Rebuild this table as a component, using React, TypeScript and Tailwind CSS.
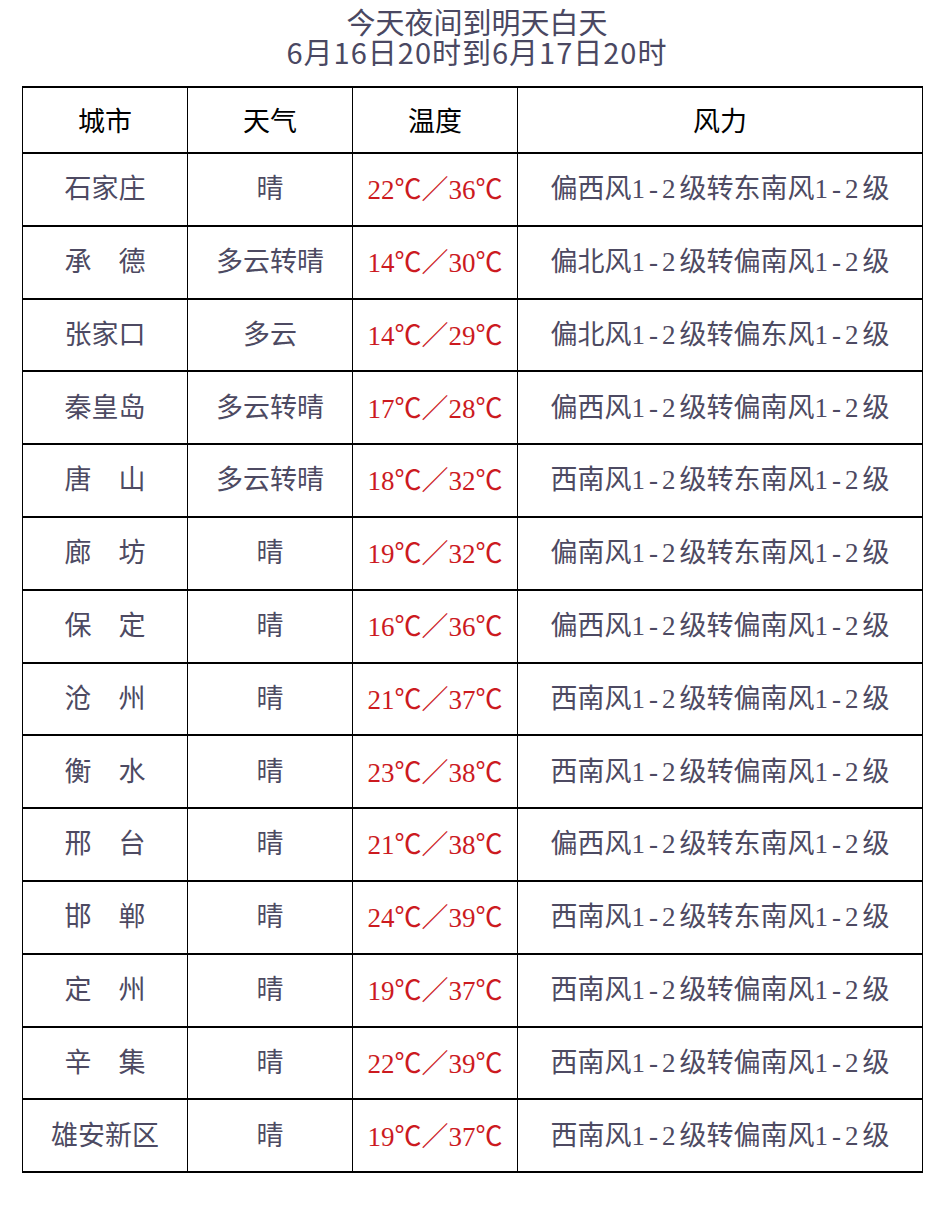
import React from "react";

const rows: [string, string, [string, string], string[]][] = [
  ["石家庄", "晴", ["22", "36"], ["偏西风", "转东南风"]],
  ["承　德", "多云转晴", ["14", "30"], ["偏北风", "转偏南风"]],
  ["张家口", "多云", ["14", "29"], ["偏北风", "转偏东风"]],
  ["秦皇岛", "多云转晴", ["17", "28"], ["偏西风", "转偏南风"]],
  ["唐　山", "多云转晴", ["18", "32"], ["西南风", "转东南风"]],
  ["廊　坊", "晴", ["19", "32"], ["偏南风", "转东南风"]],
  ["保　定", "晴", ["16", "36"], ["偏西风", "转偏南风"]],
  ["沧　州", "晴", ["21", "37"], ["西南风", "转偏南风"]],
  ["衡　水", "晴", ["23", "38"], ["西南风", "转偏南风"]],
  ["邢　台", "晴", ["21", "38"], ["偏西风", "转东南风"]],
  ["邯　郸", "晴", ["24", "39"], ["西南风", "转东南风"]],
  ["定　州", "晴", ["19", "37"], ["西南风", "转偏南风"]],
  ["辛　集", "晴", ["22", "39"], ["西南风", "转偏南风"]],
  ["雄安新区", "晴", ["19", "37"], ["西南风", "转偏南风"]],
];

const body = "[font-family:'Liberation_Serif','Noto_Sans_CJK_SC',serif]";
const cjk = "[font-family:'Noto_Sans_CJK_SC',sans-serif]";
const cell = "border-x-[1.5px] border-y-2 border-black text-center p-0 whitespace-nowrap";

function Lv() {
  return <span className="tracking-[4px]">1-2</span>;
}

export default function App() {
  return (
    <div className="w-[942px] h-[1218px] bg-white overflow-hidden">
      <div className={`pt-[6px] pl-[12px] text-center text-[#4a4862] ${cjk} text-[29px] leading-[30px] font-normal`}>
        <div>今天夜间到明天白天</div>
        <div className="tracking-[1px]">6月16日20时到6月17日20时</div>
      </div>
      <div className="pl-[22px] pt-[20px]">
        <table className={`w-[900px] border-collapse table-fixed ${body}`}>
          <colgroup>
            <col className="w-[165px]" />
            <col className="w-[165px]" />
            <col className="w-[165px]" />
            <col className="w-[405px]" />
          </colgroup>
          <thead>
            <tr className={`h-[66px] text-black text-[27px] ${cjk}`}>
              {["城市", "天气", "温度", "风力"].map((h) => (
                <th key={h} className={`${cell} font-normal`}>
                  {h}
                </th>
              ))}
            </tr>
          </thead>
          <tbody>
            {rows.map((r) => (
              <tr key={r[0]} className="h-[72.8px] text-[27px]">
                <td className={`${cell} text-[#4d4a62]`}>{r[0]}</td>
                <td className={`${cell} text-[#4d4a62]`}>{r[1]}</td>
                <td className={`${cell} text-[#cc1a1f]`}>
                  {r[2][0]}
                  <span className={cjk}>℃／</span>
                  {r[2][1]}
                  <span className={cjk}>℃</span>
                </td>
                <td className={`${cell} text-[#4d4a62]`}>
                  {r[3][0]}
                  <Lv />级{r[3][1]}
                  <Lv />级
                </td>
              </tr>
            ))}
          </tbody>
        </table>
      </div>
    </div>
  );
}
